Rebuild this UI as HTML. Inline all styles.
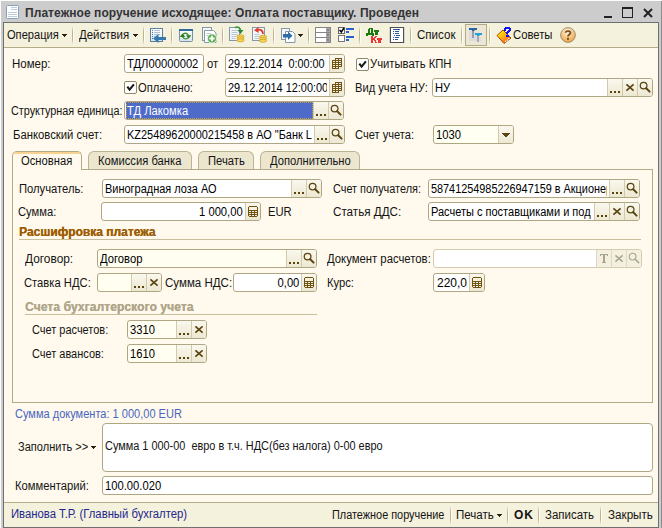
<!DOCTYPE html>
<html><head><meta charset="utf-8"><style>
*{margin:0;padding:0;box-sizing:border-box}
html,body{width:662px;height:528px;overflow:hidden}
body{background:#CCCCCC;position:relative;font-family:"Liberation Sans",sans-serif;font-size:11px}
.t{position:absolute;font:12px/13px "Liberation Sans",sans-serif;white-space:nowrap;color:#141414;transform:scaleX(.935);transform-origin:0 0}
.r{transform-origin:100% 0}
.b{font-weight:bold;transform:none}
.abs{position:absolute}
.inp{position:absolute;background:#fff;border:1px solid #AFA784;border-radius:3px;overflow:hidden}
.btn{position:absolute;top:0;bottom:0;width:15px;background:linear-gradient(#FAF8EE,#EDE8D2);border-left:1px solid #D2CAAA}
.dis{background:#F3F0E0;border-left-color:#E0D9C2}
.sep{position:absolute;width:1px;background:#D5CDB0}
</style></head>
<body>
<div class="abs" style="left:0;top:0;width:662px;height:1px;background:#FDFDFD"></div>
<div class="abs" style="left:0;top:0;width:1px;height:528px;background:#FDFDFD"></div>
<div class="abs" style="left:661px;top:1px;width:1px;height:527px;background:#8C8C8C"></div>
<div class="abs" style="left:3px;top:22px;width:656px;height:506px;border:1px solid #6F6F6F;background:#FFFAED"></div>
<svg class="abs" style="left:6px;top:5px" width="13" height="14" viewBox="0 0 13 14">
<rect x="0.5" y="0.5" width="12" height="13" rx="1" fill="#fff" stroke="#86A0B8"/>
<path d="M5 2.5h6M5 4.5h6M2 7.5h9M2 9.5h9M2 11.5h9" stroke="#BCCCDA" stroke-width="1"/>
</svg>
<div class="t b" style="left:25px;top:7px;color:#333;letter-spacing:.067px">Платежное поручение исходящее: Оплата поставщику. Проведен</div>
<div class="abs" style="left:604px;top:16px;width:8px;height:2px;background:#222"></div>
<div class="abs" style="left:622px;top:7px;width:11px;height:11px;border:1px solid #222;border-top-width:2px"></div>
<svg class="abs" style="left:643px;top:8px" width="10" height="10" viewBox="0 0 10 10">
<path d="M1 1L9 9M9 1L1 9" stroke="#222" stroke-width="2"/></svg>
<div class="abs" style="left:4px;top:23px;width:654px;height:25px;background:#F4F1DC;border-bottom:1px solid #B5AD88"></div>
<div class="t " style="left:7px;top:29px;;transform:scaleX(0.924)">Операция</div>
<svg class="abs" style="left:62px;top:34px" width="5" height="3" shape-rendering="crispEdges"><path d="M0 0h5v1h-1v1h-1v1h-1v-1h-1v-1h-1z" fill="#2A2110"/></svg>
<div class="abs" style="left:72px;top:26px;width:1px;height:19px;background:linear-gradient(rgba(190,180,140,0),#BDB28C 30%,#BDB28C 70%,rgba(190,180,140,0))"></div><div class="abs" style="left:73px;top:26px;width:1px;height:19px;background:linear-gradient(rgba(255,255,255,0),#fff 30%,#fff 70%,rgba(255,255,255,0))"></div>
<div class="t " style="left:79px;top:29px;;transform:scaleX(0.954)">Действия</div>
<svg class="abs" style="left:133px;top:34px" width="5" height="3" shape-rendering="crispEdges"><path d="M0 0h5v1h-1v1h-1v1h-1v-1h-1v-1h-1z" fill="#2A2110"/></svg>
<div class="abs" style="left:143px;top:26px;width:1px;height:19px;background:linear-gradient(rgba(190,180,140,0),#BDB28C 30%,#BDB28C 70%,rgba(190,180,140,0))"></div><div class="abs" style="left:144px;top:26px;width:1px;height:19px;background:linear-gradient(rgba(255,255,255,0),#fff 30%,#fff 70%,rgba(255,255,255,0))"></div>
<svg class="abs" style="left:150px;top:28px" width="17" height="16" viewBox="0 0 17 16">
<defs><linearGradient id="dg1" x1="0" y1="0" x2="0" y2="1"><stop offset="0" stop-color="#fff"/><stop offset="1" stop-color="#D8E4F0"/></linearGradient></defs>
<rect x="0.5" y="0.5" width="12" height="13" fill="url(#dg1)" stroke="#5F7D9A"/>
<path d="M2 2.5h1M2 4.5h1M2 6.5h1M2 8.5h1M2 10.5h1" stroke="#3A78B8"/>
<path d="M4 2.5h6M4 4.5h6M4 6.5h6M4 8.5h2" stroke="#B4C0CC"/>
<path d="M8 9h8v3H8z" fill="#3579B0"/><path d="M3 10.5L8.5 6v9z" fill="#3579B0"/>
</svg>
<div class="abs" style="left:171px;top:26px;width:1px;height:19px;background:linear-gradient(rgba(190,180,140,0),#BDB28C 30%,#BDB28C 70%,rgba(190,180,140,0))"></div><div class="abs" style="left:172px;top:26px;width:1px;height:19px;background:linear-gradient(rgba(255,255,255,0),#fff 30%,#fff 70%,rgba(255,255,255,0))"></div>
<svg class="abs" style="left:179px;top:29px" width="14" height="13" viewBox="0 0 14 13">
<defs><linearGradient id="wg" x1="0" y1="0" x2="0" y2="1"><stop offset="0" stop-color="#fff"/><stop offset="1" stop-color="#D6E2EE"/></linearGradient></defs>
<rect x="0.5" y="0.5" width="13" height="12" rx="1" fill="url(#wg)" stroke="#7890A8"/>
<rect x="0" y="0" width="14" height="2" fill="#2F6A9A"/>
<path d="M3.6 5.6A3.4 3.4 0 0 1 9.4 6.2" fill="none" stroke="#3F8F2F" stroke-width="1.3"/>
<path d="M9.4 8.4A3.4 3.4 0 0 1 3.6 8" fill="none" stroke="#3F8F2F" stroke-width="1.3"/>
<path d="M0.8 8L6.2 8L3.5 4.4z" fill="#2A7A1A"/>
<path d="M7 6.3L12.4 6.3L9.7 9.6z" fill="#2A7A1A"/>
</svg>
<svg class="abs" style="left:202px;top:27px" width="16" height="17" viewBox="0 0 16 17">
<rect x="0.5" y="0.5" width="9" height="13" fill="#F4F7FA" stroke="#8797A8"/>
<path d="M2.5 3.5h9l2.5 2.5v9.5h-11.5z" fill="#fff" stroke="#8797A8"/>
<path d="M4.5 6.5h5M4.5 8.5h3" stroke="#C0CAD4"/>
<circle cx="10" cy="11.5" r="4.6" fill="#5BAE4E" stroke="#EAF4E8" stroke-width="1"/>
<path d="M7.3 11.5h5.4M10 8.8v5.4" stroke="#fff" stroke-width="1.8"/>
</svg>
<div class="abs" style="left:222px;top:26px;width:1px;height:19px;background:linear-gradient(rgba(190,180,140,0),#BDB28C 30%,#BDB28C 70%,rgba(190,180,140,0))"></div><div class="abs" style="left:223px;top:26px;width:1px;height:19px;background:linear-gradient(rgba(255,255,255,0),#fff 30%,#fff 70%,rgba(255,255,255,0))"></div>
<svg class="abs" style="left:229px;top:26px" width="16" height="17" viewBox="0 0 16 17">
<rect x="0.5" y="1.5" width="10" height="13" fill="#F4F7FA" stroke="#8797A8"/>
<path d="M2.5 4.5h6M2.5 6.5h6M2.5 8.5h6M2.5 10.5h5M2.5 12.5h4" stroke="#B8C6D4"/>
<path d="M6 1.5C9 0.5 11 1.5 11.5 4" fill="none" stroke="#3A9A3A" stroke-width="1.6"/>
<path d="M8.5 4h6l-3 4z" fill="#2F8A2F"/>
<ellipse cx="11.5" cy="10.3" rx="3.6" ry="1.5" fill="#F6D65A" stroke="#C89A1A" stroke-width=".7"/>
<ellipse cx="11.5" cy="12.3" rx="3.6" ry="1.5" fill="#F6D65A" stroke="#C89A1A" stroke-width=".7"/>
<ellipse cx="11.5" cy="14.3" rx="3.6" ry="1.5" fill="#F6D65A" stroke="#C89A1A" stroke-width=".7"/>
</svg>
<svg class="abs" style="left:252px;top:27px" width="16" height="17" viewBox="0 0 16 17">
<rect x="0.5" y="0.5" width="12" height="13" fill="#F4F7FA" stroke="#8797A8"/>
<path d="M2.5 7.5h5M2.5 9.5h5M2.5 11.5h5" stroke="#B8C6D4"/>
<path d="M11 7C11 3 8 2 5 3" fill="none" stroke="#E03A2A" stroke-width="1.8"/>
<path d="M6.5 0L2 3.2 6.5 6z" fill="#E03A2A"/>
<ellipse cx="11" cy="9.8" rx="3.6" ry="1.5" fill="#F6D65A" stroke="#C89A1A" stroke-width=".7"/>
<ellipse cx="11" cy="11.8" rx="3.6" ry="1.5" fill="#F6D65A" stroke="#C89A1A" stroke-width=".7"/>
<ellipse cx="11" cy="13.8" rx="3.6" ry="1.5" fill="#F6D65A" stroke="#C89A1A" stroke-width=".7"/>
</svg>
<div class="abs" style="left:273px;top:26px;width:1px;height:19px;background:linear-gradient(rgba(190,180,140,0),#BDB28C 30%,#BDB28C 70%,rgba(190,180,140,0))"></div><div class="abs" style="left:274px;top:26px;width:1px;height:19px;background:linear-gradient(rgba(255,255,255,0),#fff 30%,#fff 70%,rgba(255,255,255,0))"></div>
<svg class="abs" style="left:281px;top:28px" width="15" height="15" viewBox="0 0 15 15">
<rect x="0.5" y="0.5" width="8" height="11" fill="#F4F7FA" stroke="#8797A8"/>
<path d="M4.5 3.5h7l2.5 2.5v8.5h-9.5z" fill="#fff" stroke="#8797A8"/>
<path d="M2 6h5V3.5l4.5 4.2-4.5 4.3V9.5H2z" fill="#2F6FA8"/>
</svg>
<svg class="abs" style="left:298px;top:34px" width="5" height="3" shape-rendering="crispEdges"><path d="M0 0h5v1h-1v1h-1v1h-1v-1h-1v-1h-1z" fill="#2A2110"/></svg>
<div class="abs" style="left:308px;top:26px;width:1px;height:19px;background:linear-gradient(rgba(190,180,140,0),#BDB28C 30%,#BDB28C 70%,rgba(190,180,140,0))"></div><div class="abs" style="left:309px;top:26px;width:1px;height:19px;background:linear-gradient(rgba(255,255,255,0),#fff 30%,#fff 70%,rgba(255,255,255,0))"></div>
<svg class="abs" style="left:315px;top:27px" width="16" height="16" viewBox="0 0 16 16">
<rect x="0.5" y="0.5" width="15" height="5" fill="#fff" stroke="#858585"/><rect x="11" y="1" width="4" height="4" fill="#A8A8A8"/>
<rect x="0.5" y="5.5" width="15" height="5" fill="#fff" stroke="#858585"/><rect x="11" y="6" width="4" height="4" fill="#A8A8A8"/>
<rect x="0.5" y="10.5" width="15" height="5" fill="#fff" stroke="#858585"/><rect x="11" y="11" width="4" height="4" fill="#A8A8A8"/>
<path d="M12 2.5h2l-1 1.5zM12 7.5h2l-1 1.5zM12 12.5h2l-1 1.5z" fill="#444"/>
</svg>
<svg class="abs" style="left:338px;top:27px" width="17" height="16" viewBox="0 0 17 16">
<rect x="0.5" y="0.5" width="6" height="6" fill="#fff" stroke="#666"/>
<path d="M1.5 3l1.8 2L6 1" stroke="#000" fill="none" stroke-width="1.5"/>
<rect x="0.5" y="8.5" width="6" height="6" fill="#fff" stroke="#777"/>
<path d="M8 2h8M8 5h3M8 10h8M8 13h3" stroke="#2A5FD0" stroke-width="2"/>
</svg>
<div class="abs" style="left:359px;top:26px;width:1px;height:19px;background:linear-gradient(rgba(190,180,140,0),#BDB28C 30%,#BDB28C 70%,rgba(190,180,140,0))"></div><div class="abs" style="left:360px;top:26px;width:1px;height:19px;background:linear-gradient(rgba(255,255,255,0),#fff 30%,#fff 70%,rgba(255,255,255,0))"></div>
<svg class="abs" style="left:364px;top:26px" width="20" height="18" shape-rendering="crispEdges">
<g fill="#1C7A0E"><rect x="5" y="2" width="4" height="1"/><rect x="4" y="3" width="2" height="4"/><rect x="7" y="3" width="2" height="4"/><rect x="2" y="7" width="8" height="2"/><rect x="2" y="9" width="2" height="1"/><rect x="8" y="9" width="2" height="1"/>
<rect x="10" y="4" width="5" height="2"/><rect x="11" y="6" width="3" height="3"/></g>
<g fill="#F23434"><rect x="7" y="10" width="2" height="7"/><rect x="9" y="12" width="2" height="2"/><rect x="10" y="11" width="2" height="1"/><rect x="11" y="10" width="2" height="1"/><rect x="10" y="14" width="2" height="1"/><rect x="11" y="15" width="1" height="1"/><rect x="11" y="16" width="2" height="1"/>
<rect x="13" y="12" width="5" height="2"/><rect x="14" y="14" width="3" height="3"/></g>
</svg>
<svg class="abs" style="left:389px;top:27px" width="16" height="16" viewBox="0 0 16 16">
<rect x="0" y="0" width="16" height="16" fill="#D4D4D4"/>
<rect x="1.5" y="0.5" width="13" height="15" fill="#fff" stroke="#505050"/>
<path d="M4 2.5h7" stroke="#2A5A9A"/>
<path d="M4 4.5h1M4 6.5h1M5 8.5h1M4 10.5h1M4 12.5h1" stroke="#2A5A9A"/>
<path d="M6 4.5h4M6 6.5h4M7 8.5h4M6 10.5h4M6 12.5h3" stroke="#2A5A9A"/>
</svg>
<div class="abs" style="left:410px;top:26px;width:1px;height:19px;background:linear-gradient(rgba(190,180,140,0),#BDB28C 30%,#BDB28C 70%,rgba(190,180,140,0))"></div><div class="abs" style="left:411px;top:26px;width:1px;height:19px;background:linear-gradient(rgba(255,255,255,0),#fff 30%,#fff 70%,rgba(255,255,255,0))"></div>
<div class="t " style="left:417px;top:29px;;transform:scaleX(0.963)">Список</div>
<div class="abs" style="left:461px;top:26px;width:1px;height:19px;background:linear-gradient(rgba(190,180,140,0),#BDB28C 30%,#BDB28C 70%,rgba(190,180,140,0))"></div><div class="abs" style="left:462px;top:26px;width:1px;height:19px;background:linear-gradient(rgba(255,255,255,0),#fff 30%,#fff 70%,rgba(255,255,255,0))"></div>
<div class="abs" style="left:465px;top:24px;width:22px;height:22px;background:#ECE7D4;border:1px solid #B3AB88"></div>
<svg class="abs" style="left:469px;top:28px" width="15" height="15" viewBox="0 0 15 15">
<path d="M0 2L4 2 L6 4 L8 5 L13 13 L0 13z" fill="#DCDCDE"/>
<rect x="3" y="2" width="2" height="8" fill="#9A9EA4"/>
<path d="M0 0H8V2H6L5 3H3V2H0z" fill="#2C62A0"/>
<rect x="8" y="7" width="2" height="7" fill="#A8ACB2"/>
<path d="M6 5H13V7H11L10 8H8V7H6z" fill="#22A0DA"/>
</svg>
<div class="abs" style="left:489px;top:26px;width:1px;height:19px;background:linear-gradient(rgba(190,180,140,0),#BDB28C 30%,#BDB28C 70%,rgba(190,180,140,0))"></div><div class="abs" style="left:490px;top:26px;width:1px;height:19px;background:linear-gradient(rgba(255,255,255,0),#fff 30%,#fff 70%,rgba(255,255,255,0))"></div>
<svg class="abs" style="left:496px;top:26px" width="17" height="18" viewBox="0 0 17 18">
<defs><linearGradient id="bk" x1="0.2" y1="0.2" x2="0.8" y2="0.9"><stop offset="0" stop-color="#FFEA00"/><stop offset=".5" stop-color="#FFA020"/><stop offset="1" stop-color="#F06010"/></linearGradient></defs>
<path d="M1 9.5L7 4 15 12 8 17.5z" fill="url(#bk)" stroke="#A84408" stroke-width="1"/>
<path d="M9.2 15.8L13.8 11.8" stroke="#fff" stroke-width="1.3" stroke-dasharray="1.2 .9"/>
<g shape-rendering="crispEdges" fill="#1010F0"><rect x="9" y="1" width="5" height="2"/><rect x="8" y="2" width="2" height="3"/><rect x="13" y="2" width="2" height="3"/><rect x="12" y="4" width="2" height="2"/><rect x="11" y="5" width="2" height="2"/><rect x="10" y="6" width="2" height="2"/><rect x="10" y="9" width="3" height="2"/></g>
</svg>
<div class="t " style="left:513px;top:29px;;transform:scaleX(0.94)">Советы</div>
<svg class="abs" style="left:560px;top:27px" width="16" height="16" viewBox="0 0 16 16">
<defs><radialGradient id="hg" cx="45%" cy="30%" r="70%"><stop offset="0" stop-color="#FFF4E0"/><stop offset=".55" stop-color="#F8C880"/><stop offset="1" stop-color="#ECA040"/></radialGradient></defs>
<circle cx="8" cy="8" r="7.4" fill="url(#hg)" stroke="#9A8A78" stroke-width=".9"/>
<path d="M5.5 5.8C5.5 3.5 10.5 3.5 10.5 5.8 10.5 7.6 8 7.6 8 9.6" fill="none" stroke="#7A4E2A" stroke-width="1.8"/>
<rect x="7" y="10.8" width="2" height="2" fill="#7A4E2A"/>
</svg>
<div class="t " style="left:11.5px;top:58px;;transform:scaleX(0.957)">Номер:</div>
<div class="inp" style="left:124px;top:54px;width:80px;height:19px;border-color:#AFA784;background:#fff"><div class="abs" style="left:0;top:0;width:78px;height:17px;overflow:hidden"><div class="t" style="left:2px;top:3px;color:#000">ТДЛ00000002</div></div></div>
<div class="t " style="left:207px;top:58px;">от</div>
<div class="inp" style="left:225px;top:54px;width:120px;height:19px;border-color:#AFA784;background:#fff"><div class="abs" style="left:0;top:0;width:101px;height:17px;overflow:hidden"><div class="t" style="left:2px;top:3px;color:#000;transform:scaleX(0.905)">29.12.2014&nbsp; 0:00:00</div></div><div class="btn" style="left:103px"><svg class="abs" style="left:2px;top:3px" width="10" height="11" shape-rendering="crispEdges"><path d="M3 0h7v9H7v2H0V2h3z" fill="#6E5214"/><rect x="4" y="1" width="2" height="1" fill="#F6F2DE"/><rect x="7" y="1" width="2" height="1" fill="#F6F2DE"/><rect x="1" y="3" width="2" height="1" fill="#F6F2DE"/><rect x="4" y="3" width="2" height="1" fill="#F6F2DE"/><rect x="7" y="3" width="2" height="1" fill="#F6F2DE"/><rect x="1" y="5" width="2" height="1" fill="#F6F2DE"/><rect x="4" y="5" width="2" height="1" fill="#F6F2DE"/><rect x="7" y="5" width="2" height="1" fill="#F6F2DE"/><rect x="1" y="7" width="2" height="1" fill="#F6F2DE"/><rect x="4" y="7" width="2" height="1" fill="#F6F2DE"/><rect x="7" y="7" width="2" height="1" fill="#F6F2DE"/><rect x="1" y="9" width="2" height="1" fill="#F6F2DE"/><rect x="4" y="9" width="2" height="1" fill="#F6F2DE"/></svg></div></div>
<svg class="abs" style="left:356px;top:58px" width="13" height="13" viewBox="0 0 13 13"><rect x="0.5" y="0.5" width="12" height="12" rx="1.5" fill="#fff" stroke="#8F8A6A"/>
<path d="M3.3 5.6L5.6 8.6 9.9 3.4" fill="none" stroke="#1A1A1A" stroke-width="2.1"/></svg>
<div class="t " style="left:370px;top:58px;;transform:scaleX(0.94)">Учитывать КПН</div>
<svg class="abs" style="left:124px;top:81px" width="13" height="13" viewBox="0 0 13 13"><rect x="0.5" y="0.5" width="12" height="12" rx="1.5" fill="#fff" stroke="#8F8A6A"/>
<path d="M3.3 5.6L5.6 8.6 9.9 3.4" fill="none" stroke="#1A1A1A" stroke-width="2.1"/></svg>
<div class="t " style="left:138px;top:82px;">Оплачено:</div>
<div class="inp" style="left:225px;top:78px;width:120px;height:19px;border-color:#AFA784;background:#fff"><div class="abs" style="left:0;top:0;width:101px;height:17px;overflow:hidden"><div class="t" style="left:2px;top:3px;color:#000;transform:scaleX(0.91)">29.12.2014 12:00:00</div></div><div class="btn" style="left:103px"><svg class="abs" style="left:2px;top:3px" width="10" height="11" shape-rendering="crispEdges"><path d="M3 0h7v9H7v2H0V2h3z" fill="#6E5214"/><rect x="4" y="1" width="2" height="1" fill="#F6F2DE"/><rect x="7" y="1" width="2" height="1" fill="#F6F2DE"/><rect x="1" y="3" width="2" height="1" fill="#F6F2DE"/><rect x="4" y="3" width="2" height="1" fill="#F6F2DE"/><rect x="7" y="3" width="2" height="1" fill="#F6F2DE"/><rect x="1" y="5" width="2" height="1" fill="#F6F2DE"/><rect x="4" y="5" width="2" height="1" fill="#F6F2DE"/><rect x="7" y="5" width="2" height="1" fill="#F6F2DE"/><rect x="1" y="7" width="2" height="1" fill="#F6F2DE"/><rect x="4" y="7" width="2" height="1" fill="#F6F2DE"/><rect x="7" y="7" width="2" height="1" fill="#F6F2DE"/><rect x="1" y="9" width="2" height="1" fill="#F6F2DE"/><rect x="4" y="9" width="2" height="1" fill="#F6F2DE"/></svg></div></div>
<div class="t " style="left:355px;top:82px;;transform:scaleX(0.93)">Вид учета НУ:</div>
<div class="inp" style="left:432px;top:78px;width:221px;height:19px;border-color:#AFA784;background:#fff"><div class="abs" style="left:0;top:0;width:172px;height:17px;overflow:hidden"><div class="t" style="left:2px;top:3px;color:#000">НУ</div></div><div class="btn" style="left:174px"><svg class="abs" style="left:0;top:0" width="14" height="17" shape-rendering="crispEdges"><rect x="2" y="12" width="2" height="2" fill="#5A4510"/><rect x="6" y="12" width="2" height="2" fill="#5A4510"/><rect x="10" y="12" width="2" height="2" fill="#5A4510"/></svg></div><div class="btn" style="left:189px"><svg class="abs" style="left:0;top:0" width="14" height="17"><path d="M3.4 5.4L10.6 11.6M10.6 5.4L3.4 11.6" stroke="#5A4510" stroke-width="1.7"/></svg></div><div class="btn" style="left:204px"><svg class="abs" style="left:0;top:0" width="14" height="17"><circle cx="5.6" cy="6.6" r="3.35" fill="none" stroke="#5A4510" stroke-width="1.25"/><path d="M8.2 9.2L11.6 12.6" stroke="#5A4510" stroke-width="2.0" stroke-linecap="round"/></svg></div></div>
<div class="t " style="left:11px;top:105px;;transform:scaleX(0.902)">Структурная единица:</div>
<div class="inp" style="left:124px;top:101px;width:220px;height:19px;border-color:#AFA784;background:#fff"><div class="abs" style="left:1px;top:0px;width:187px;height:17px;background:#4F6BC9;border:1px dotted #C8A040"></div><div class="t" style="left:2px;top:3px;color:#fff">ТД Лакомка</div><div class="btn" style="left:188px"><svg class="abs" style="left:0;top:0" width="14" height="17" shape-rendering="crispEdges"><rect x="2" y="12" width="2" height="2" fill="#5A4510"/><rect x="6" y="12" width="2" height="2" fill="#5A4510"/><rect x="10" y="12" width="2" height="2" fill="#5A4510"/></svg></div><div class="btn" style="left:203px"><svg class="abs" style="left:0;top:0" width="14" height="17"><circle cx="5.6" cy="6.6" r="3.35" fill="none" stroke="#5A4510" stroke-width="1.25"/><path d="M8.2 9.2L11.6 12.6" stroke="#5A4510" stroke-width="2.0" stroke-linecap="round"/></svg></div></div>
<div class="t " style="left:13px;top:129px;;transform:scaleX(0.941)">Банковский счет:</div>
<div class="inp" style="left:124px;top:125px;width:221px;height:19px;border-color:#AFA784;background:#fff"><div class="abs" style="left:0;top:0;width:187px;height:17px;overflow:hidden"><div class="t" style="left:2px;top:3px;color:#000;transform:scaleX(0.911)">KZ25489620000215458 в АО "Банк L</div></div><div class="btn" style="left:189px"><svg class="abs" style="left:0;top:0" width="14" height="17" shape-rendering="crispEdges"><rect x="2" y="12" width="2" height="2" fill="#5A4510"/><rect x="6" y="12" width="2" height="2" fill="#5A4510"/><rect x="10" y="12" width="2" height="2" fill="#5A4510"/></svg></div><div class="btn" style="left:204px"><svg class="abs" style="left:0;top:0" width="14" height="17"><circle cx="5.6" cy="6.6" r="3.35" fill="none" stroke="#5A4510" stroke-width="1.25"/><path d="M8.2 9.2L11.6 12.6" stroke="#5A4510" stroke-width="2.0" stroke-linecap="round"/></svg></div></div>
<div class="t " style="left:355px;top:129px;;transform:scaleX(0.925)">Счет учета:</div>
<div class="inp" style="left:433px;top:125px;width:81px;height:19px;border-color:#AFA784;background:#FFFFF2"><div class="abs" style="left:0;top:0;width:62px;height:17px;overflow:hidden"><div class="t" style="left:2px;top:3px;color:#000">1030</div></div><div class="btn" style="left:64px"><svg class="abs" style="left:0;top:0" width="14" height="17" shape-rendering="crispEdges"><path d="M3 7h8v1h-1v1h-1v1h-1v1h-2v-1h-1v-1h-1v-1h-1z" fill="#5A4510"/></svg></div></div>
<div class="abs" style="left:12px;top:169px;width:641px;height:234px;border:1px solid #B2AA88;z-index:1"></div>
<div class="abs" style="left:12px;top:151px;width:70px;height:19px;background:#FFFAED;border:1px solid #B2AA88;border-bottom:none;border-radius:5px 5px 0 0;z-index:2"><div class="abs" style="left:1px;right:1px;top:0;height:2px;background:#F8D290;border-radius:3px 3px 0 0"></div></div>
<div class="t " style="left:21px;top:155px;z-index:3">Основная</div>
<div class="abs" style="left:88px;top:151px;width:104px;height:19px;background:#ECE6CF;border:1px solid #BAB293;border-bottom:none;border-radius:6px 6px 0 0"></div>
<div class="t " style="left:98px;top:155px;z-index:3">Комиссия банка</div>
<div class="abs" style="left:198px;top:151px;width:56px;height:19px;background:#ECE6CF;border:1px solid #BAB293;border-bottom:none;border-radius:6px 6px 0 0"></div>
<div class="t " style="left:208px;top:155px;z-index:3">Печать</div>
<div class="abs" style="left:260px;top:151px;width:100px;height:19px;background:#ECE6CF;border:1px solid #BAB293;border-bottom:none;border-radius:6px 6px 0 0"></div>
<div class="t " style="left:270px;top:155px;z-index:3">Дополнительно</div>
<div class="t " style="left:19px;top:183px;">Получатель:</div>
<div class="inp" style="left:102px;top:179px;width:220px;height:19px;border-color:#AFA784;background:#fff"><div class="abs" style="left:0;top:0;width:186px;height:17px;overflow:hidden"><div class="t" style="left:2px;top:3px;color:#000;transform:scaleX(0.913)">Виноградная лоза АО</div></div><div class="btn" style="left:188px"><svg class="abs" style="left:0;top:0" width="14" height="17" shape-rendering="crispEdges"><rect x="2" y="12" width="2" height="2" fill="#5A4510"/><rect x="6" y="12" width="2" height="2" fill="#5A4510"/><rect x="10" y="12" width="2" height="2" fill="#5A4510"/></svg></div><div class="btn" style="left:203px"><svg class="abs" style="left:0;top:0" width="14" height="17"><circle cx="5.6" cy="6.6" r="3.35" fill="none" stroke="#5A4510" stroke-width="1.25"/><path d="M8.2 9.2L11.6 12.6" stroke="#5A4510" stroke-width="2.0" stroke-linecap="round"/></svg></div></div>
<div class="t " style="left:333px;top:183px;;transform:scaleX(0.907)">Счет получателя:</div>
<div class="inp" style="left:428px;top:179px;width:212px;height:19px;border-color:#AFA784;background:#fff"><div class="abs" style="left:0;top:0;width:178px;height:17px;overflow:hidden"><div class="t" style="left:2px;top:3px;color:#000;transform:scaleX(0.905)">58741254985226947159 в Акционер</div></div><div class="btn" style="left:180px"><svg class="abs" style="left:0;top:0" width="14" height="17" shape-rendering="crispEdges"><rect x="2" y="12" width="2" height="2" fill="#5A4510"/><rect x="6" y="12" width="2" height="2" fill="#5A4510"/><rect x="10" y="12" width="2" height="2" fill="#5A4510"/></svg></div><div class="btn" style="left:195px"><svg class="abs" style="left:0;top:0" width="14" height="17"><circle cx="5.6" cy="6.6" r="3.35" fill="none" stroke="#5A4510" stroke-width="1.25"/><path d="M8.2 9.2L11.6 12.6" stroke="#5A4510" stroke-width="2.0" stroke-linecap="round"/></svg></div></div>
<div class="t " style="left:18px;top:206px;">Сумма:</div>
<div class="inp" style="left:101px;top:202px;width:160px;height:19px;border-color:#AFA784;background:#fff"><div class="t r" style="right:17px;top:3px;color:#000">1 000,00</div><div class="btn" style="left:143px"><svg class="abs" style="left:2px;top:3px" width="10" height="11" shape-rendering="crispEdges"><rect x="0" y="0" width="10" height="11" fill="#6E5214"/><rect x="0" y="0" width="1" height="1" fill="#E8E2C8"/><rect x="9" y="0" width="1" height="1" fill="#E8E2C8"/><rect x="0" y="10" width="1" height="1" fill="#E8E2C8"/><rect x="9" y="10" width="1" height="1" fill="#E8E2C8"/><rect x="1" y="1" width="8" height="3" fill="#F6F2DE"/><rect x="1" y="5" width="2" height="1" fill="#F6F2DE"/><rect x="4" y="5" width="2" height="1" fill="#F6F2DE"/><rect x="7" y="5" width="2" height="1" fill="#F6F2DE"/><rect x="1" y="7" width="2" height="1" fill="#F6F2DE"/><rect x="4" y="7" width="2" height="1" fill="#F6F2DE"/><rect x="7" y="7" width="2" height="1" fill="#F6F2DE"/><rect x="1" y="9" width="2" height="1" fill="#F6F2DE"/><rect x="4" y="9" width="2" height="1" fill="#F6F2DE"/><rect x="7" y="9" width="2" height="1" fill="#F6F2DE"/></svg></div></div>
<div class="t " style="left:268px;top:206px;">EUR</div>
<div class="t " style="left:333px;top:206px;;transform:scaleX(0.971)">Статья ДДС:</div>
<div class="inp" style="left:428px;top:202px;width:212px;height:19px;border-color:#AFA784;background:#fff"><div class="abs" style="left:0;top:0;width:163px;height:17px;overflow:hidden"><div class="t" style="left:2px;top:3px;color:#000;transform:scaleX(0.917)">Расчеты с поставщиками и под</div></div><div class="btn" style="left:165px"><svg class="abs" style="left:0;top:0" width="14" height="17" shape-rendering="crispEdges"><rect x="2" y="12" width="2" height="2" fill="#5A4510"/><rect x="6" y="12" width="2" height="2" fill="#5A4510"/><rect x="10" y="12" width="2" height="2" fill="#5A4510"/></svg></div><div class="btn" style="left:180px"><svg class="abs" style="left:0;top:0" width="14" height="17"><path d="M3.4 5.4L10.6 11.6M10.6 5.4L3.4 11.6" stroke="#5A4510" stroke-width="1.7"/></svg></div><div class="btn" style="left:195px"><svg class="abs" style="left:0;top:0" width="14" height="17"><circle cx="5.6" cy="6.6" r="3.35" fill="none" stroke="#5A4510" stroke-width="1.25"/><path d="M8.2 9.2L11.6 12.6" stroke="#5A4510" stroke-width="2.0" stroke-linecap="round"/></svg></div></div>
<div class="t b" style="left:19px;top:226px;color:#9E5E06;text-shadow:.35px 0 0 #9E5E06">Расшифровка платежа</div>
<div class="abs" style="left:19px;top:239px;width:622px;height:1px;background:#C9BE9C"></div>
<div class="t " style="left:24.5px;top:253px;;transform:scaleX(0.99)">Договор:</div>
<div class="inp" style="left:97px;top:249px;width:220px;height:19px;border-color:#AFA784;background:#FFFEF0"><div class="abs" style="left:0;top:0;width:186px;height:17px;overflow:hidden"><div class="t" style="left:2px;top:3px;color:#000">Договор</div></div><div class="btn" style="left:188px"><svg class="abs" style="left:0;top:0" width="14" height="17" shape-rendering="crispEdges"><rect x="2" y="12" width="2" height="2" fill="#5A4510"/><rect x="6" y="12" width="2" height="2" fill="#5A4510"/><rect x="10" y="12" width="2" height="2" fill="#5A4510"/></svg></div><div class="btn" style="left:203px"><svg class="abs" style="left:0;top:0" width="14" height="17"><circle cx="5.6" cy="6.6" r="3.35" fill="none" stroke="#5A4510" stroke-width="1.25"/><path d="M8.2 9.2L11.6 12.6" stroke="#5A4510" stroke-width="2.0" stroke-linecap="round"/></svg></div></div>
<div class="t " style="left:327px;top:253px;;transform:scaleX(0.943)">Документ расчетов:</div>
<div class="inp" style="left:433px;top:249px;width:209px;height:19px;border-color:#D4CCB0;background:#fff"><div class="btn dis" style="left:162px"><svg class="abs" style="left:0;top:0" width="14" height="17" shape-rendering="crispEdges"><path d="M3 4h8v2h-1v-1h-2v7h1v1h-4v-1h1v-7h-2v1h-1z" fill="#A9A38F"/></svg></div><div class="btn dis" style="left:177px"><svg class="abs" style="left:0;top:0" width="14" height="17"><path d="M3.4 5.4L10.6 11.6M10.6 5.4L3.4 11.6" stroke="#ABA592" stroke-width="1.5"/></svg></div><div class="btn dis" style="left:192px"><svg class="abs" style="left:0;top:0" width="14" height="17"><circle cx="5.6" cy="6.6" r="3.35" fill="none" stroke="#ABA592" stroke-width="1.1"/><path d="M8.2 9.2L11.6 12.6" stroke="#ABA592" stroke-width="1.6" stroke-linecap="round"/></svg></div></div>
<div class="t " style="left:24px;top:277px;">Ставка НДС:</div>
<div class="inp" style="left:97px;top:273px;width:65px;height:19px;border-color:#AFA784;background:#FFFEF0"><div class="btn" style="left:33px"><svg class="abs" style="left:0;top:0" width="14" height="17" shape-rendering="crispEdges"><rect x="2" y="12" width="2" height="2" fill="#5A4510"/><rect x="6" y="12" width="2" height="2" fill="#5A4510"/><rect x="10" y="12" width="2" height="2" fill="#5A4510"/></svg></div><div class="btn" style="left:48px"><svg class="abs" style="left:0;top:0" width="14" height="17"><path d="M3.4 5.4L10.6 11.6M10.6 5.4L3.4 11.6" stroke="#5A4510" stroke-width="1.7"/></svg></div></div>
<div class="t " style="left:164.5px;top:277px;;transform:scaleX(0.961)">Сумма НДС:</div>
<div class="inp" style="left:233px;top:273px;width:84px;height:19px;border-color:#AFA784;background:#fff"><div class="t r" style="right:17px;top:3px;color:#000">0,00</div><div class="btn" style="left:67px"><svg class="abs" style="left:2px;top:3px" width="10" height="11" shape-rendering="crispEdges"><rect x="0" y="0" width="10" height="11" fill="#6E5214"/><rect x="0" y="0" width="1" height="1" fill="#E8E2C8"/><rect x="9" y="0" width="1" height="1" fill="#E8E2C8"/><rect x="0" y="10" width="1" height="1" fill="#E8E2C8"/><rect x="9" y="10" width="1" height="1" fill="#E8E2C8"/><rect x="1" y="1" width="8" height="3" fill="#F6F2DE"/><rect x="1" y="5" width="2" height="1" fill="#F6F2DE"/><rect x="4" y="5" width="2" height="1" fill="#F6F2DE"/><rect x="7" y="5" width="2" height="1" fill="#F6F2DE"/><rect x="1" y="7" width="2" height="1" fill="#F6F2DE"/><rect x="4" y="7" width="2" height="1" fill="#F6F2DE"/><rect x="7" y="7" width="2" height="1" fill="#F6F2DE"/><rect x="1" y="9" width="2" height="1" fill="#F6F2DE"/><rect x="4" y="9" width="2" height="1" fill="#F6F2DE"/><rect x="7" y="9" width="2" height="1" fill="#F6F2DE"/></svg></div></div>
<div class="t " style="left:326.5px;top:277px;">Курс:</div>
<div class="inp" style="left:433px;top:273px;width:52px;height:19px;border-color:#AFA784;background:#fff"><div class="abs" style="left:0;top:0;width:33px;height:17px;overflow:hidden"><div class="t" style="left:3px;top:3px;color:#000;transform:scaleX(1.0)">220,00</div></div><div class="btn" style="left:35px"><svg class="abs" style="left:2px;top:3px" width="10" height="11" shape-rendering="crispEdges"><rect x="0" y="0" width="10" height="11" fill="#6E5214"/><rect x="0" y="0" width="1" height="1" fill="#E8E2C8"/><rect x="9" y="0" width="1" height="1" fill="#E8E2C8"/><rect x="0" y="10" width="1" height="1" fill="#E8E2C8"/><rect x="9" y="10" width="1" height="1" fill="#E8E2C8"/><rect x="1" y="1" width="8" height="3" fill="#F6F2DE"/><rect x="1" y="5" width="2" height="1" fill="#F6F2DE"/><rect x="4" y="5" width="2" height="1" fill="#F6F2DE"/><rect x="7" y="5" width="2" height="1" fill="#F6F2DE"/><rect x="1" y="7" width="2" height="1" fill="#F6F2DE"/><rect x="4" y="7" width="2" height="1" fill="#F6F2DE"/><rect x="7" y="7" width="2" height="1" fill="#F6F2DE"/><rect x="1" y="9" width="2" height="1" fill="#F6F2DE"/><rect x="4" y="9" width="2" height="1" fill="#F6F2DE"/><rect x="7" y="9" width="2" height="1" fill="#F6F2DE"/></svg></div></div>
<div class="t b" style="left:25px;top:301px;color:#B0A68A;letter-spacing:.1px;text-shadow:.3px 0 0 #B0A68A">Счета бухгалтерского учета</div>
<div class="abs" style="left:25px;top:314px;width:292px;height:1px;background:#C9BE9C"></div>
<div class="t " style="left:32px;top:324px;;transform:scaleX(0.914)">Счет расчетов:</div>
<div class="inp" style="left:127px;top:320px;width:80px;height:19px;border-color:#AFA784;background:#FFFEF0"><div class="abs" style="left:0;top:0;width:46px;height:17px;overflow:hidden"><div class="t" style="left:2px;top:3px;color:#000">3310</div></div><div class="btn" style="left:48px"><svg class="abs" style="left:0;top:0" width="14" height="17" shape-rendering="crispEdges"><rect x="2" y="12" width="2" height="2" fill="#5A4510"/><rect x="6" y="12" width="2" height="2" fill="#5A4510"/><rect x="10" y="12" width="2" height="2" fill="#5A4510"/></svg></div><div class="btn" style="left:63px"><svg class="abs" style="left:0;top:0" width="14" height="17"><path d="M3.4 5.4L10.6 11.6M10.6 5.4L3.4 11.6" stroke="#5A4510" stroke-width="1.7"/></svg></div></div>
<div class="t " style="left:32px;top:348px;;transform:scaleX(0.914)">Счет авансов:</div>
<div class="inp" style="left:127px;top:344px;width:80px;height:19px;border-color:#AFA784;background:#FFFEF0"><div class="abs" style="left:0;top:0;width:46px;height:17px;overflow:hidden"><div class="t" style="left:2px;top:3px;color:#000">1610</div></div><div class="btn" style="left:48px"><svg class="abs" style="left:0;top:0" width="14" height="17" shape-rendering="crispEdges"><rect x="2" y="12" width="2" height="2" fill="#5A4510"/><rect x="6" y="12" width="2" height="2" fill="#5A4510"/><rect x="10" y="12" width="2" height="2" fill="#5A4510"/></svg></div><div class="btn" style="left:63px"><svg class="abs" style="left:0;top:0" width="14" height="17"><path d="M3.4 5.4L10.6 11.6M10.6 5.4L3.4 11.6" stroke="#5A4510" stroke-width="1.7"/></svg></div></div>
<div class="t " style="left:15px;top:408px;color:#4A66C0;transform:scaleX(0.919)">Сумма документа: 1 000,00 EUR</div>
<div class="t " style="left:18px;top:441px;;transform:scaleX(0.92)">Заполнить &gt;&gt;</div>
<svg class="abs" style="left:91px;top:446px" width="5" height="3" shape-rendering="crispEdges"><path d="M0 0h5v1h-1v1h-1v1h-1v-1h-1v-1h-1z" fill="#2A2110"/></svg>
<div class="inp" style="left:102px;top:423px;width:551px;height:49px;border-radius:4px"></div>
<div class="t " style="left:104.5px;top:440px;;transform:scaleX(0.909)">Сумма 1 000-00&nbsp; евро в т.ч. НДС(без налога) 0-00 евро</div>
<div class="t " style="left:15px;top:480px;">Комментарий:</div>
<div class="inp" style="left:102px;top:476px;width:551px;height:19px;border-color:#AFA784;background:#fff"><div class="abs" style="left:0;top:0;width:549px;height:17px;overflow:hidden"><div class="t" style="left:2px;top:3px;color:#000">100.00.020</div></div></div>
<div class="abs" style="left:4px;top:502px;width:654px;height:25px;background:#F4F1DC;border-top:1px solid #B5AD88"></div>
<div class="t " style="left:11px;top:508px;color:#1F2890;transform:scaleX(0.941)">Иванова Т.Р. (Главный бухгалтер)</div>
<div class="t " style="left:332px;top:509px;;transform:scaleX(0.907)">Платежное поручение</div>
<div class="abs" style="left:450px;top:506px;width:1px;height:19px;background:linear-gradient(rgba(190,180,140,0),#BDB28C 30%,#BDB28C 70%,rgba(190,180,140,0))"></div><div class="abs" style="left:451px;top:506px;width:1px;height:19px;background:linear-gradient(rgba(255,255,255,0),#fff 30%,#fff 70%,rgba(255,255,255,0))"></div>
<div class="t " style="left:456px;top:509px;;transform:scaleX(0.962)">Печать</div>
<svg class="abs" style="left:497px;top:514px" width="5" height="3" shape-rendering="crispEdges"><path d="M0 0h5v1h-1v1h-1v1h-1v-1h-1v-1h-1z" fill="#2A2110"/></svg>
<div class="abs" style="left:507px;top:506px;width:1px;height:19px;background:linear-gradient(rgba(190,180,140,0),#BDB28C 30%,#BDB28C 70%,rgba(190,180,140,0))"></div><div class="abs" style="left:508px;top:506px;width:1px;height:19px;background:linear-gradient(rgba(255,255,255,0),#fff 30%,#fff 70%,rgba(255,255,255,0))"></div>
<div class="t b" style="left:514px;top:509px;letter-spacing:.8px">OK</div>
<div class="abs" style="left:538px;top:506px;width:1px;height:19px;background:linear-gradient(rgba(190,180,140,0),#BDB28C 30%,#BDB28C 70%,rgba(190,180,140,0))"></div><div class="abs" style="left:539px;top:506px;width:1px;height:19px;background:linear-gradient(rgba(255,255,255,0),#fff 30%,#fff 70%,rgba(255,255,255,0))"></div>
<div class="t " style="left:545px;top:509px;;transform:scaleX(0.955)">Записать</div>
<div class="abs" style="left:600px;top:506px;width:1px;height:19px;background:linear-gradient(rgba(190,180,140,0),#BDB28C 30%,#BDB28C 70%,rgba(190,180,140,0))"></div><div class="abs" style="left:601px;top:506px;width:1px;height:19px;background:linear-gradient(rgba(255,255,255,0),#fff 30%,#fff 70%,rgba(255,255,255,0))"></div>
<div class="t " style="left:607.5px;top:509px;;transform:scaleX(0.972)">Закрыть</div>
</body></html>
